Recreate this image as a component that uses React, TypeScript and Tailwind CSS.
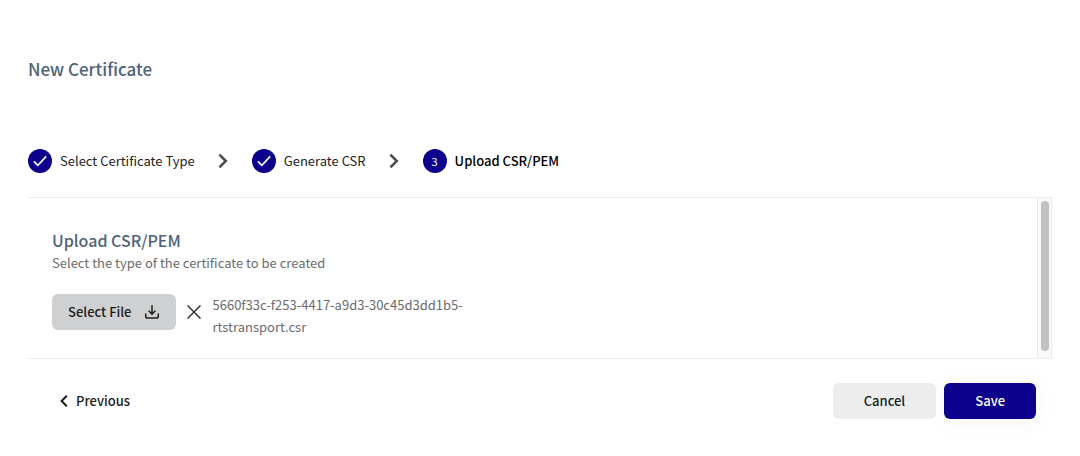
import React from 'react';

// ─── Icons ───────────────────────────────────────────────────────────────────

function CheckIcon() {
  return (
    <svg width="14" height="12" viewBox="0 0 14 12" fill="none" stroke="currentColor" strokeWidth="1.6" aria-hidden="true">
      <path d="M0.8 6.4 4.9 10.4 13.2 1.4" />
    </svg>
  );
}

function ChevronRightIcon() {
  return (
    <svg width="10" height="16" viewBox="0 0 10 16" fill="none" stroke="currentColor" strokeWidth="2.6" aria-hidden="true">
      <path d="M1.4 1.6 7.8 8 1.4 14.4" />
    </svg>
  );
}

function ChevronLeftIcon() {
  return (
    <svg width="8" height="12" viewBox="0 0 8 12" fill="none" stroke="currentColor" strokeWidth="2" aria-hidden="true">
      <path d="M6.8 0.8 1.6 6 6.8 11.2" />
    </svg>
  );
}

function DownloadIcon() {
  return (
    <svg width="16" height="16" viewBox="0 0 16 16" fill="none" stroke="currentColor" strokeWidth="1.5" aria-hidden="true">
      <path d="M8 1.2V10M4.6 6.8 8 10.2 11.4 6.8" />
      <path d="M1.7 9.6V12.2Q1.7 14 3.5 14H12.5Q14.3 14 14.3 12.2V9.6" />
    </svg>
  );
}

function CloseIcon() {
  return (
    <svg width="14" height="14" viewBox="0 0 14 14" fill="none" stroke="currentColor" strokeWidth="1.5" aria-hidden="true">
      <path d="M0.5 0.5 13.5 13.5M13.5 0.5 0.5 13.5" />
    </svg>
  );
}

// ─── Stepper ─────────────────────────────────────────────────────────────────

const STEPS = [
  { label: 'Select Certificate Type', done: true },
  { label: 'Generate CSR', done: true },
  { label: 'Upload CSR/PEM', done: false },
];

function Stepper() {
  return (
    <ol className="flex flex-wrap items-center">
      {STEPS.map((step, i) => (
        <li
          key={step.label}
          aria-current={step.done ? undefined : 'step'}
          className="flex items-center"
        >
          <span className="flex size-6 items-center justify-center rounded-full bg-[#0c008c] text-[11px] leading-4 text-white">
            {step.done ? <CheckIcon /> : i + 1}
          </span>
          <span className={step.done ? 'ml-2 text-[#222]' : 'ml-2 font-medium text-black'}>
            {step.label}
          </span>
          {i < STEPS.length - 1 && (
            <span className="mr-6 ml-[23px] text-[#4d4d4d]">
              <ChevronRightIcon />
            </span>
          )}
        </li>
      ))}
    </ol>
  );
}

// ─── Page ────────────────────────────────────────────────────────────────────

export default function App() {
  return (
    <main className="bg-white px-7 pt-[57px] pb-9 font-['Noto_Sans_CJK_SC','Noto_Sans',sans-serif] text-[13px] leading-[22px]">
      <h1 className="text-[17px] leading-6 font-medium text-[#4f6379]">New Certificate</h1>

      <div className="mt-[68px]">
        <Stepper />
      </div>

      {/* Step content with its scroll track */}
      <section className="mt-6 flex border-y border-[#ececec]">
        <div className="min-w-0 flex-1 px-6 pt-[30px] pb-5">
          <h2 className="text-base leading-6 font-medium text-[#4f6379]">Upload CSR/PEM</h2>
          <p className="text-[#6b6b6b]">Select the type of the certificate to be created</p>

          <div className="mt-5 flex items-start">
            <button
              type="button"
              className="flex h-9 items-center gap-[13px] rounded-md bg-[#cfd0d2] px-4 font-medium text-[#1c1c1c]"
            >
              Select File
              <DownloadIcon />
            </button>
            <button
              type="button"
              aria-label="Remove file"
              className="flex h-9 items-center px-[11px] text-[#333]"
            >
              <CloseIcon />
            </button>
            <span className="w-[260px] text-[#6b6b6b]">
              5660f33c-f253-4417-a9d3-30c45d3dd1b5-rtstransport.csr
            </span>
          </div>
        </div>
        <div className="flex w-[15px] justify-center border-x border-[#e8e8e8] bg-[#fafafa] pt-[3px] pb-[7px]">
          <div className="w-2 rounded-full bg-[#c1c1c1]" />
        </div>
      </section>

      <footer className="mt-6 flex items-center justify-between px-4">
        <button type="button" className="flex h-9 items-center gap-2 px-4 font-medium text-[#1c1c1c]">
          <ChevronLeftIcon />
          Previous
        </button>
        <div className="flex gap-2">
          <button type="button" className="h-9 rounded-md bg-[#ededed] px-[31px] font-medium text-[#0f1e24]">
            Cancel
          </button>
          <button
            type="button"
            className="h-9 rounded-md bg-[#0c008c] px-[31px] font-medium text-white shadow-[0_2px_24px_rgba(0,0,0,0.05)]"
          >
            Save
          </button>
        </div>
      </footer>
    </main>
  );
}
